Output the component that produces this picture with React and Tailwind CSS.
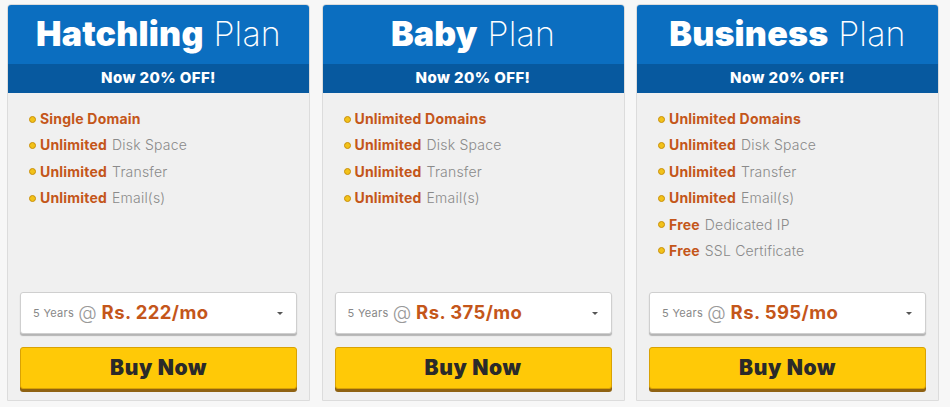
import React from "react";

const plans = [
  {
    name: "Hatchling",
    price: "Rs. 222/mo",
    features: [
      ["Single Domain", ""],
      ["Unlimited", "Disk Space"],
      ["Unlimited", "Transfer"],
      ["Unlimited", "Email(s)"],
    ],
  },
  {
    name: "Baby",
    price: "Rs. 375/mo",
    features: [
      ["Unlimited Domains", ""],
      ["Unlimited", "Disk Space"],
      ["Unlimited", "Transfer"],
      ["Unlimited", "Email(s)"],
    ],
  },
  {
    name: "Business",
    price: "Rs. 595/mo",
    features: [
      ["Unlimited Domains", ""],
      ["Unlimited", "Disk Space"],
      ["Unlimited", "Transfer"],
      ["Unlimited", "Email(s)"],
      ["Free", "Dedicated IP"],
      ["Free", "SSL Certificate"],
    ],
  },
];

function Card({ plan }) {
  return (
    <div className="w-[303px] h-[397px] flex flex-col rounded-t-[4px] overflow-hidden bg-[#f0f0f0] border border-[#dcdcdc]">
      <div className="h-[60px] bg-[#0b6ec0] flex items-center justify-center -mx-px -mt-px">
        <span className="text-[34px] leading-none text-white tracking-[0.2px]">
          <span className="font-black">{plan.name}</span>{" "}
          <span className="font-extralight">Plan</span>
        </span>
      </div>
      <div className="h-[29px] bg-[#07599f] flex items-center justify-center text-white font-extrabold text-[15px] tracking-[0.4px] -mx-px">
        Now 20% OFF!
      </div>
      <ul className="flex flex-col gap-[10.4px] pl-[21px] pt-[18px]">
        {plan.features.map(([b, n], i) => (
          <li key={i} className="flex items-center h-[16px] text-[14px] leading-none tracking-[0.2px]">
            <span className="w-[7px] h-[7px] rounded-full bg-[#f2c21a] border border-[#c98f0a] mr-[4px]" />
            <span className="font-bold text-[#c4561a]">{b}</span>
            {n && <span className="text-[#8a8a8a] ml-[5px] font-light">{n}</span>}
          </li>
        ))}
      </ul>
      <div className="mt-auto px-[12px] pb-[11px] flex flex-col gap-[13px]">
        <div className="h-[42px] bg-white border border-[#cfcfcf] rounded-[3px] shadow-[0_2px_1px_rgba(0,0,0,0.25)] flex items-center pl-[12px] pr-[13px]">
          <span className="text-[11px] text-[#888] tracking-[0.3px]">5 Years</span>
          <span className="text-[19px] text-[#999] ml-[4px] font-light">@</span>
          <span className="text-[18.5px] font-bold text-[#c4561a] ml-[5px] tracking-[0.4px]">{plan.price}</span>
          <span className="ml-auto w-0 h-0 border-l-[3px] border-r-[3px] border-t-[3px] border-l-transparent border-r-transparent border-t-[#555]" />
        </div>
        <button className="h-[42px] bg-[#ffc907] border border-[#d9a204] rounded-[3px] shadow-[0_3px_0_#8f6212] text-[#2a2a2a] font-black text-[21px] tracking-[0.6px]">
          Buy Now
        </button>
      </div>
    </div>
  );
}

export default function App() {
  return (
    <div className="w-[950px] h-[407px] bg-[#f7f7f7] pt-[4px] pl-[7px] flex gap-[11.5px]" style={{ fontFamily: "Inter, 'Noto Sans', sans-serif" }}>
      {plans.map((p) => (
        <Card key={p.name} plan={p} />
      ))}
    </div>
  );
}
